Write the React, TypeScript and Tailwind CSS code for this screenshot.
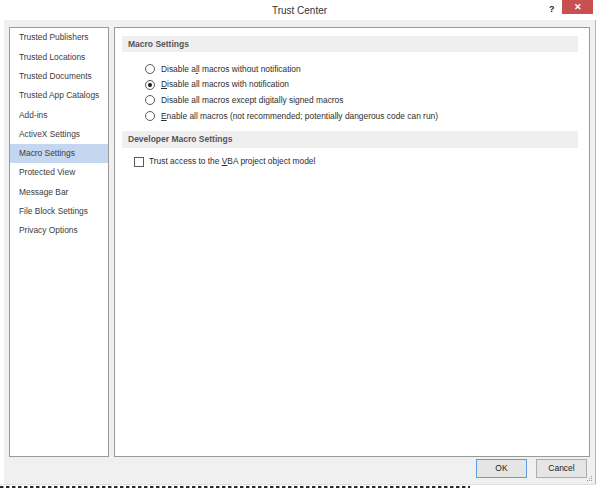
import React from "react";

const F = { fontFamily: '"Liberation Sans", Arial, sans-serif' };

const items = [
  "Trusted Publishers",
  "Trusted Locations",
  "Trusted Documents",
  "Trusted App Catalogs",
  "Add-ins",
  "ActiveX Settings",
  "Macro Settings",
  "Protected View",
  "Message Bar",
  "File Block Settings",
  "Privacy Options",
];

function Radio({ checked }: { checked?: boolean }) {
  return (
    <span className="w-[10px] h-[10px] rounded-full border border-[#5a5a5a] bg-white flex items-center justify-center shrink-0">
      {checked && <span className="w-[4px] h-[4px] rounded-full bg-[#1a1a1a]" />}
    </span>
  );
}

export default function App() {
  const radios: React.ReactNode[] = [
    <>Disable a<u>l</u>l macros without notification</>,
    <><u>D</u>isable all macros with notification</>,
    <>Disable all macros except digitally signed macros</>,
    <><u>E</u>nable all macros (not recommended; potentially dangerous code can run)</>,
  ];
  return (
    <div className="w-[599px] h-[489px] bg-white overflow-hidden relative flex flex-col" style={F}>
      {/* title bar */}
      <div className="h-[20px] relative flex items-center justify-center shrink-0">
        <span className="text-[10px] text-[#333]">Trust Center</span>
        <span className="absolute left-[549px] top-[3px] text-[9px] font-bold text-[#222]">?</span>
        <div className="absolute left-[562px] top-0 w-[31px] h-[14px] bg-[#c75050] flex items-center justify-center">
          <span className="text-white text-[9px] font-bold leading-none">✕</span>
        </div>
      </div>
      {/* body */}
      <div className="flex w-[596px] h-[464px] shrink-0">
        <div className="w-[4px] bg-white" />
        <div className="w-[591px] bg-[#f0f0f0] flex flex-col relative">
          <div className="flex pt-[7px] pl-[5px] gap-[5px]">
            {/* left list */}
            <div className="w-[100px] h-[430px] bg-white border border-[#9a9a9a]">
              {items.map((t) => (
                <div
                  key={t}
                  className={
                    "h-[19.3px] flex items-center pl-[9px] text-[8.4px] text-[#3c3c3c] " +
                    (t === "Macro Settings" ? "bg-[#c5d6f0]" : "")
                  }
                >
                  {t}
                </div>
              ))}
            </div>
            {/* right panel */}
            <div className="w-[476px] h-[430px] bg-white border border-[#9a9a9a] px-[7px] pt-[8px]">
              <div className="w-[456px] h-[16px] bg-[#efefef] flex items-center pl-[6px] text-[8.5px] font-bold text-[#555]">
                Macro Settings
              </div>
              <div className="pt-[9px] pl-[23px]">
                {radios.map((r, i) => (
                  <div key={i} className="h-[15.7px] flex items-center gap-[6px] text-[8.4px] text-[#2e2e2e]">
                    <Radio checked={i === 1} />
                    <span>{r}</span>
                  </div>
                ))}
              </div>
              <div className="mt-[7px] w-[456px] h-[17px] bg-[#efefef] flex items-center pl-[6px] text-[8.5px] font-bold text-[#555]">
                Developer Macro Settings
              </div>
              <div className="mt-[6px] pl-[12px] h-[15.7px] flex items-center gap-[5px] text-[8.4px] text-[#2e2e2e]">
                <span className="w-[10px] h-[10px] border border-[#5a5a5a] bg-white shrink-0" />
                <span>
                  Trust access to the <u>V</u>BA project object model
                </span>
              </div>
            </div>
          </div>
          {/* buttons */}
          <div className="flex justify-end gap-[9px] pr-[8px] pt-[2px]">
            <div className="w-[51px] h-[19px] border border-[#5c9ee6] bg-[#e5e5e5] flex items-center justify-center text-[8.5px] text-[#222]">
              OK
            </div>
            <div className="w-[51px] h-[19px] border border-[#adadad] bg-[#e5e5e5] flex items-center justify-center text-[8.5px] text-[#222]">
              Cancel
            </div>
          </div>
          {/* grip */}
          <svg className="absolute right-[2px] bottom-[2px]" width="6" height="6" viewBox="0 0 6 6">
            <rect x="4" y="0" width="1" height="1" fill="#999" />
            <rect x="2" y="2" width="1" height="1" fill="#999" />
            <rect x="4" y="2" width="1" height="1" fill="#999" />
            <rect x="0" y="4" width="1" height="1" fill="#999" />
            <rect x="2" y="4" width="1" height="1" fill="#999" />
            <rect x="4" y="4" width="1" height="1" fill="#999" />
          </svg>
        </div>
        <div className="w-[1px] bg-[#b5b5b5]" />
      </div>
      <div className="h-[1px] bg-[#e0e0e0] w-[596px] shrink-0" />
      <div className="mt-[1px] h-[2px] w-[470px] shrink-0 bg-[repeating-linear-gradient(90deg,#2a2a2a_0px,#2a2a2a_3px,#9a9a9a_3px,#9a9a9a_4px,transparent_4px,transparent_6px)]" />
    </div>
  );
}
